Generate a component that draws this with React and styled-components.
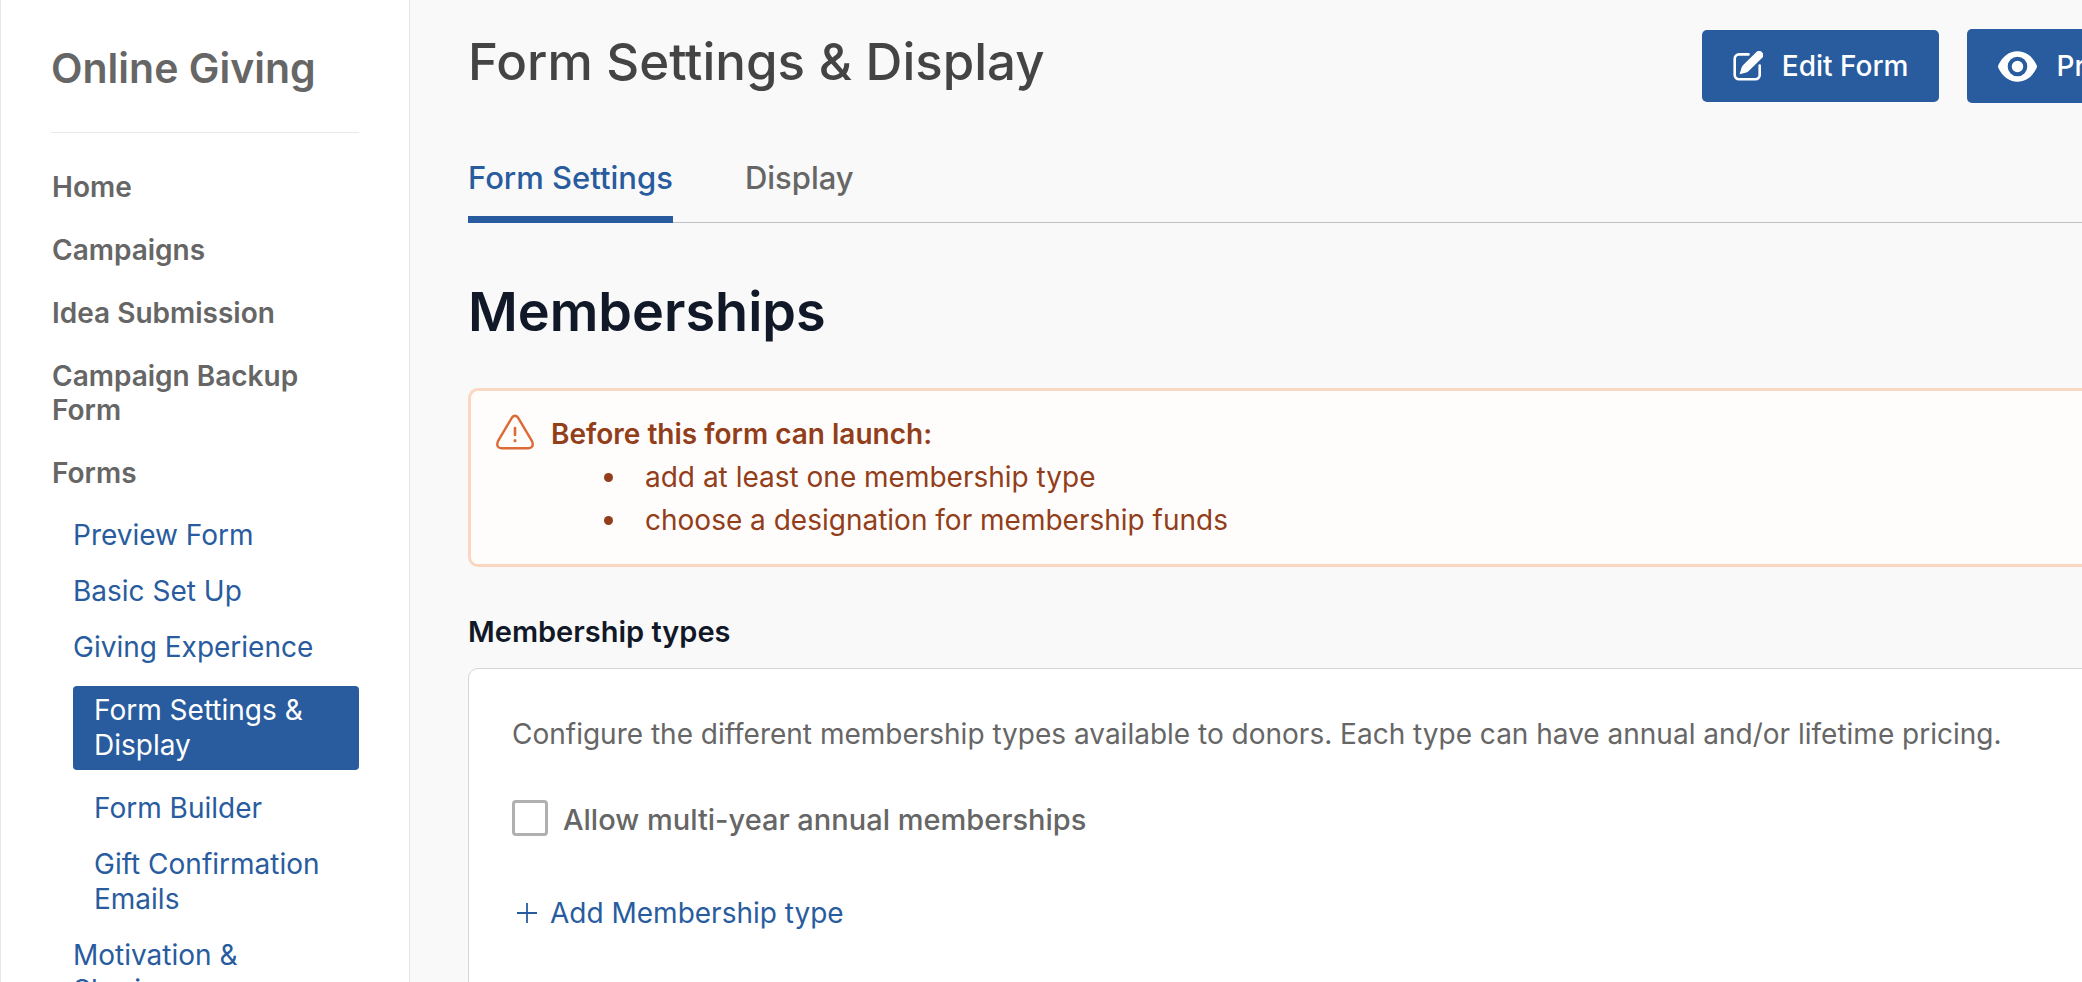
import React, { useState } from 'react';
import styled, { createGlobalStyle } from 'styled-components';


const GlobalStyle = createGlobalStyle`
* {
   box-sizing: border-box;
}

body {
   margin: 0;
   font-family: Inter, 'Liberation Sans', sans-serif;
   font-size: 28px;
   color: #666666;
   background-color: #f9f9f9;
}

a {
   text-decoration: none;
}
`

const Shell = styled.div`
display: flex;
height: 100vh;
overflow: hidden;
`

const Sidebar = styled.aside`
flex: none;
width: 410px;
padding: 40px 50px 0;
background-color: #ffffff;
border-left: 1px solid #e5e5ea;
border-right: 1px solid #e5e5e8;
`

const SidebarTitle = styled.h2`
margin: 0;
padding-bottom: 36px;
border-bottom: 1px solid #e9e9e9;
font-size: 41px;
line-height: 56px;
font-weight: 600;
white-space: nowrap;
`

const NavList = styled.ul`
display: flex;
flex-direction: column;
gap: 29px;
margin: 0;
padding: 37px 0 0 1px;
list-style: none;
`

const NavLink = styled.a`
display: block;
line-height: 34px;
font-weight: 600;
color: #666666;
`

const SubList = styled.ul`
display: flex;
flex-direction: column;
gap: 21px;
margin: 0;
padding: 28px 0 0 21px;
list-style: none;
`

const SubLink = styled.a`
display: block;
line-height: 35px;
padding: ${props => props.$active ? '7px 21px' : props.$nested ? '0 21px' : '0 21px 0 0'};
border-radius: 4px;
color: ${props => props.$active ? '#ffffff' : '#285c9e'};
background-color: ${props => props.$active ? '#285c9e' : 'transparent'};
`

const Main = styled.main`
flex: 1;
min-width: 0;
padding-left: 58px;
overflow: hidden;
`

// runs past the right edge of the window, like the wide form area
const Content = styled.div`
width: calc(100% + 112px);
`

const Header = styled.header`
display: flex;
align-items: flex-start;
justify-content: space-between;
padding-top: 29px;
`

const PageTitle = styled.h1`
margin: 0;
font-size: 51px;
line-height: 66px;
font-weight: 500;
color: #444444;
`

const Actions = styled.div`
display: flex;
align-items: center;
gap: 28px;
`

const ActionButton = styled.button`
display: flex;
align-items: center;
gap: 19px;
height: ${props => props.$tall ? '74px' : '72px'};
padding: 0 31px;
border: none;
border-radius: 5px;
font: inherit;
font-weight: 500;
color: #ffffff;
background-color: #285c9e;
cursor: pointer;
`

const Tabs = styled.div`
display: flex;
gap: 72px;
margin-top: 48px;
border-bottom: 1px solid #c0c0c0;
`

const Tab = styled.button`
height: 72px;
margin-bottom: -1px;
padding: 0 0 12px;
border: none;
border-bottom: 7px solid ${props => props.$active ? '#285c9e' : 'transparent'};
background: none;
font: inherit;
font-size: 31px;
font-weight: 500;
color: ${props => props.$active ? '#285c9e' : '#666666'};
cursor: pointer;
`

const SectionTitle = styled.h2`
margin: 54px 0 41px;
font-size: 54px;
line-height: 70px;
font-weight: 600;
color: #111827;
`

const Alert = styled.section`
display: flex;
gap: 17px;
padding: 22px 25px;
border: 3px solid #f9d7c0;
border-radius: 10px;
background-color: #fffdfc;
color: #923e1a;
line-height: 43px;
`

const AlertTitle = styled.strong`
display: block;
font-weight: 600;
`

const AlertList = styled.ul`
margin: 0;
padding: 0 0 0 53px;
list-style: none;

li {
   display: flex;
   align-items: center;
   gap: 32px;
}

li::before {
   content: '';
   width: 9px;
   height: 9px;
   border-radius: 50%;
   background-color: #923e1a;
}
`

const FieldTitle = styled.h3`
margin: 45px 0 16px;
font-size: 29px;
line-height: 40px;
font-weight: 600;
color: #111827;
`

const Card = styled.section`
min-height: 400px;
padding: 44px 43px;
border: 1px solid #d6d6d6;
border-radius: 10px;
background-color: #ffffff;
`

const Description = styled.p`
margin: 0 0 45px;
line-height: 42px;
`

const CheckLabel = styled.label`
display: flex;
align-items: flex-start;
gap: 15px;
font-size: 29px;
line-height: 40px;
font-weight: 500;
`

const Checkbox = styled.input`
appearance: none;
width: 36px;
height: 36px;
margin: 0;
border: 3px solid #b0b0b0;
border-radius: 4px;
background-color: #ffffff;

&:checked {
   background-color: #285c9e;
}
`

const AddButton = styled.button`
display: flex;
align-items: center;
gap: 13px;
margin-top: 53px;
padding: 0 0 0 5px;
border: none;
background: none;
font: inherit;
line-height: 40px;
color: #285c9e;
cursor: pointer;
`

const EditIcon = () => (
   <svg width="30" height="30" viewBox="0 0 30 30" fill="none" aria-hidden="true">
      <path d="M15.5 3.4H6A4.3 4.3 0 0 0 1.7 7.7V24A4.3 4.3 0 0 0 6 28.3H22.4A4.3 4.3 0 0 0 26.7 24V14.6" stroke="#fff" strokeWidth="2.6" strokeLinecap="round" />
      <path d="M6.6 23.2L8.6 16.6Q9.1 15.2 10.4 13.8L23.2 1.2A4 4 0 0 1 29 7L16.2 19.6Q14.8 21 13.4 21.5Z" fill="#fff" />
   </svg>
)

const EyeIcon = () => (
   <svg width="39" height="31" viewBox="0 0 39 31" aria-hidden="true">
      <path fill="#fff" fillRule="evenodd" d="M0.4 14C4.5 5.6 11 0.3 19.5 0.3S34.5 5.6 38.6 14Q39.3 15.5 38.6 17C34.5 25.4 28 30.7 19.5 30.7S4.5 25.4 0.4 17Q-0.3 15.5 0.4 14ZM19.5 5.7A9.8 9.8 0 1 0 19.5 25.3A9.8 9.8 0 1 0 19.5 5.7Z" />
      <circle cx="19.5" cy="15.5" r="5.7" fill="#fff" />
   </svg>
)

const WarningIcon = () => (
   <svg width="38" height="38" viewBox="0 0 38 38" fill="none" stroke="#dc6a35" strokeLinecap="round" aria-hidden="true">
      <path d="M15.8 4.8Q19 0.8 22.2 4.8L36 28.2Q38.4 34.6 32.6 35.2H5.4Q-0.4 34.6 2 28.2Z" strokeWidth="2.4" strokeLinejoin="round" />
      <path d="M19 15V22" strokeWidth="2.6" />
      <path d="M19 27.6V27.7" strokeWidth="3" />
   </svg>
)

const PlusIcon = () => (
   <svg width="20" height="20" viewBox="0 0 20 20" stroke="#285c9e" strokeWidth="1.8" aria-hidden="true">
      <path d="M10 0V20M0 10H20" />
   </svg>
)

const navItems = ['Home', 'Campaigns', 'Idea Submission', 'Campaign Backup Form'];

const formItems = [
   { label: 'Preview Form' },
   { label: 'Basic Set Up' },
   { label: 'Giving Experience' },
   { label: 'Form Settings & Display', nested: true, active: true },
   { label: 'Form Builder', nested: true },
   { label: 'Gift Confirmation Emails', nested: true },
   { label: 'Motivation & Sharing' }
];

const tabs = ['Form Settings', 'Display'];

const App = () => {
   const [tab, setTab] = useState('Form Settings');
   const [multiYear, setMultiYear] = useState(false);

   return (
      <Shell>
         <GlobalStyle />
         <Sidebar>
            <SidebarTitle>Online Giving</SidebarTitle>
            <nav>
               <NavList>
                  {navItems.map(item => (
                     <li key={item}><NavLink href="#">{item}</NavLink></li>
                  ))}
                  <li>
                     <NavLink href="#">Forms</NavLink>
                     <SubList>
                        {formItems.map(item => (
                           <li key={item.label}>
                              <SubLink href="#" $nested={item.nested} $active={item.active}>{item.label}</SubLink>
                           </li>
                        ))}
                     </SubList>
                  </li>
               </NavList>
            </nav>
         </Sidebar>
         <Main>
            <Content>
               <Header>
                  <PageTitle>Form Settings &amp; Display</PageTitle>
                  <Actions>
                     <ActionButton type="button"><EditIcon />Edit Form</ActionButton>
                     <ActionButton type="button" $tall><EyeIcon />Preview</ActionButton>
                  </Actions>
               </Header>
               <Tabs role="tablist">
                  {tabs.map(name => (
                     <Tab key={name} type="button" role="tab" aria-selected={tab === name} $active={tab === name} onClick={() => setTab(name)}>{name}</Tab>
                  ))}
               </Tabs>
               <SectionTitle>Memberships</SectionTitle>
               <Alert>
                  <WarningIcon />
                  <div>
                     <AlertTitle>Before this form can launch:</AlertTitle>
                     <AlertList>
                        <li>add at least one membership type</li>
                        <li>choose a designation for membership funds</li>
                     </AlertList>
                  </div>
               </Alert>
               <FieldTitle>Membership types</FieldTitle>
               <Card>
                  <Description>Configure the different membership types available to donors. Each type can have annual and/or lifetime pricing.</Description>
                  <CheckLabel htmlFor="multi-year">
                     <Checkbox id="multi-year" type="checkbox" checked={multiYear} onChange={e => setMultiYear(e.target.checked)} />
                     Allow multi-year annual memberships
                  </CheckLabel>
                  <AddButton type="button"><PlusIcon />Add Membership type</AddButton>
               </Card>
            </Content>
         </Main>
      </Shell>
   )
}

export default App;
